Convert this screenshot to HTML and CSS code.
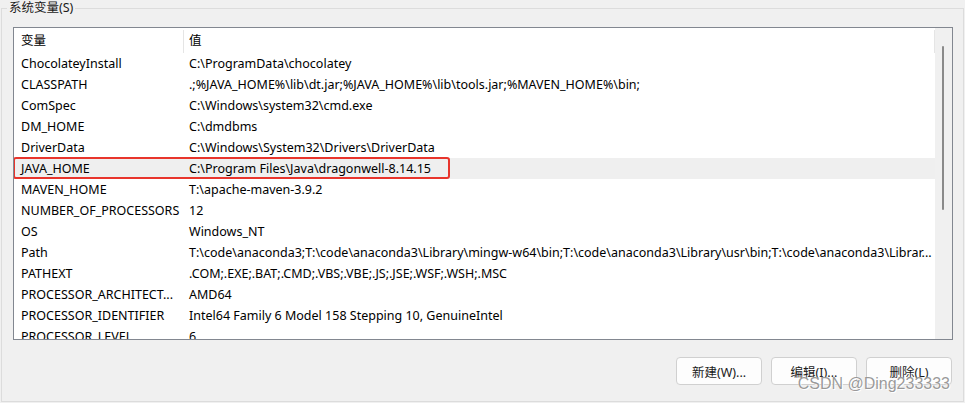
FILE: index.html
```
<!DOCTYPE html>
<html lang="zh-CN">
<head>
    <meta charset="UTF-8">
    <title>系统变量</title>
    <link rel="stylesheet" href="styles.css">
</head>
<body>

<fieldset class="group">
    <legend>系统变量(S)</legend>

    <div class="listbox">
        <div class="table">
            <div class="head">
                <div class="cell name">变量</div>
                <div class="cell value">值</div>
            </div>
            <div class="row"><div class="cell name">ChocolateyInstall</div><div class="cell value">C:\ProgramData\chocolatey</div></div>
            <div class="row"><div class="cell name">CLASSPATH</div><div class="cell value">.;%JAVA_HOME%\lib\dt.jar;%JAVA_HOME%\lib\tools.jar;%MAVEN_HOME%\bin;</div></div>
            <div class="row"><div class="cell name">ComSpec</div><div class="cell value">C:\Windows\system32\cmd.exe</div></div>
            <div class="row"><div class="cell name">DM_HOME</div><div class="cell value">C:\dmdbms</div></div>
            <div class="row"><div class="cell name">DriverData</div><div class="cell value">C:\Windows\System32\Drivers\DriverData</div></div>
            <div class="row selected">
                <div class="cell name">JAVA_HOME</div><div class="cell value">C:\Program Files\Java\dragonwell-8.14.15</div>
                <span class="mark"></span>
            </div>
            <div class="row"><div class="cell name">MAVEN_HOME</div><div class="cell value">T:\apache-maven-3.9.2</div></div>
            <div class="row"><div class="cell name">NUMBER_OF_PROCESSORS</div><div class="cell value">12</div></div>
            <div class="row"><div class="cell name">OS</div><div class="cell value">Windows_NT</div></div>
            <div class="row"><div class="cell name">Path</div><div class="cell value">T:\code\anaconda3;T:\code\anaconda3\Library\mingw-w64\bin;T:\code\anaconda3\Library\usr\bin;T:\code\anaconda3\Librar...</div></div>
            <div class="row"><div class="cell name">PATHEXT</div><div class="cell value">.COM;.EXE;.BAT;.CMD;.VBS;.VBE;.JS;.JSE;.WSF;.WSH;.MSC</div></div>
            <div class="row"><div class="cell name">PROCESSOR_ARCHITECT...</div><div class="cell value">AMD64</div></div>
            <div class="row"><div class="cell name">PROCESSOR_IDENTIFIER</div><div class="cell value">Intel64 Family 6 Model 158 Stepping 10, GenuineIntel</div></div>
            <div class="row"><div class="cell name">PROCESSOR_LEVEL</div><div class="cell value">6</div></div>
        </div>
        <div class="scrollbar">
            <div class="thumb"></div>
        </div>
    </div>

    <div class="buttons">
        <button>新建(W)...</button>
        <button>编辑(I)...</button>
        <button>删除(L)</button>
    </div>

    <div class="watermark">CSDN @Ding233333</div>
</fieldset>

</body>
</html>
```

FILE: styles.css
```
body {
    margin: 0;
    width: 965px;
    height: 403px;
    overflow: hidden;
    background-color: #f0f0f0;
    font-family: 'Noto Sans', 'Noto Sans CJK SC', sans-serif;
    font-size: 12px;
    color: #000;
}
.group {
    position: relative;
    margin: 0 1px 0 1px;
    padding: 11px 10px 16px 11px;
    border: 1px solid #dcdcdc;
    min-width: 0;
}
.group legend {
    margin-left: -6px;
    padding: 0 2px;
    height: 16px;
    line-height: 16px;
    font-size: 12.5px;
    color: #1a1a1a;
}
.listbox {
    display: flex;
    height: 311px;
    border: 1px solid #828790;
    background-color: #fff;
    overflow: hidden;
}
.table {
    width: 921px;
    overflow: hidden;
}
.head, .row {
    display: grid;
    grid-template-columns: 170px 1fr;
}
.head {
    height: 25px;
    font-size: 12.5px;
}
.head .cell {
    border-right: 1px solid #e5e5e5;
    height: 23px;
    margin-top: 2px;
    line-height: 21px;
}
.row {
    position: relative;
    height: 21px;
    line-height: 21px;
    font-size: 12.5px;
}
.cell {
    white-space: nowrap;
    overflow: hidden;
}
.cell.name {
    padding-left: 7px;
}
.cell.value {
    padding-left: 5px;
}
.row.selected {
    background-color: #efefef;
}
.mark {
    position: absolute;
    left: -1px;
    top: -1px;
    width: 437px;
    height: 22px;
    box-sizing: border-box;
    border: 2px solid #e8352c;
    border-radius: 3px;
}
.scrollbar {
    width: 17px;
    background-color: #f0f0f0;
    padding-top: 18px;
}
.thumb {
    width: 2px;
    height: 164px;
    margin-left: 7px;
    border-radius: 1px;
    background-color: #8a8a8a;
}
.buttons {
    display: flex;
    justify-content: flex-end;
    gap: 9px;
    margin-top: 17px;
    padding-right: 1px;
}
.buttons button {
    width: 86px;
    height: 28px;
    padding: 0;
    background-color: #fdfdfd;
    border: 1px solid #d0d0d0;
    border-radius: 4px;
    font-family: inherit;
    font-size: 12.5px;
    color: #1a1a1a;
}
.watermark {
    position: absolute;
    right: 13px;
    bottom: 8px;
    font-family: 'Liberation Sans', sans-serif;
    font-size: 16px;
    color: rgba(120, 120, 120, 0.75);
    text-shadow: 0 0 1px #fff, 1px 1px 0 #fff;
}
```
